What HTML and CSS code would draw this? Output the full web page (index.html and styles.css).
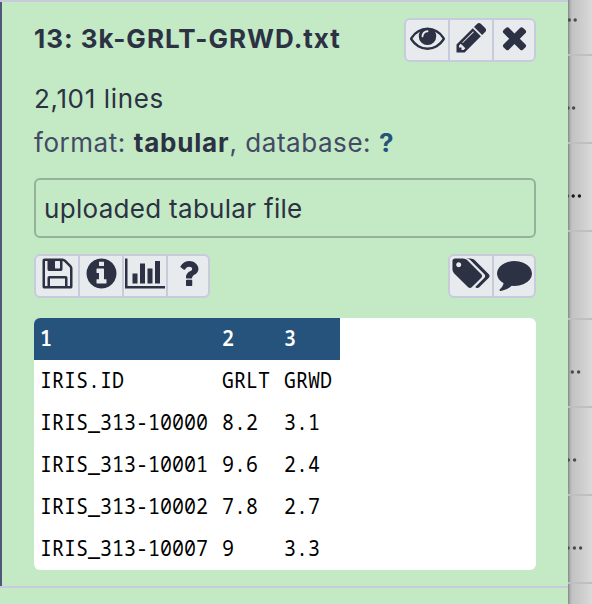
FILE: index.html
```html
<!DOCTYPE html>
<html lang="en">
<head>
<meta charset="utf-8">
<title>History item</title>
<link rel="stylesheet" href="styles.css">
</head>
<body>
<div class="app">
  <main class="history">
    <section class="dataset">
      <header class="title-row">
        <h1 class="title">13: 3k-GRLT-GRWD.txt</h1>
        <div class="group">
          <span class="btn"><svg class="icon" viewBox="0 0 1792 1792"><path d="M1664 960q-152-236-381-353 61 104 61 225 0 185-131.5 316.5t-316.5 131.5-316.5-131.5-131.5-316.5q0-121 61-225-229 117-381 353 133 205 333.5 326.5t434.5 121.5 434.5-121.5 333.5-326.5zm-720-384q0-20-14-34t-34-14q-125 0-214.5 89.5t-89.5 214.5q0 20 14 34t34 14 34-14 14-34q0-86 61-147t147-61q20 0 34-14t14-34zm848 384q0 34-20 69-140 230-376.5 368.5t-499.5 138.5-499.5-139-376.5-368q-20-35-20-69t20-69q140-229 376.5-368t499.5-139 499.5 139 376.5 368q20 35 20 69z"/></svg></span>
          <span class="btn"><svg class="icon" viewBox="0 0 1792 1792"><path d="M491 1536l91-91-235-235-91 91v107h128v128h107zm523-928q0-22-22-22-10 0-17 7l-542 542q-7 7-7 17 0 22 22 22 10 0 17-7l542-542q7-7 7-17zm-54-192l416 416-832 832h-416v-416zm683 96q0 53-37 90l-166 166-416-416 166-165q36-38 90-38 53 0 91 38l235 234q37 39 37 91z"/></svg></span>
          <span class="btn"><svg class="icon" viewBox="0 0 1792 1792"><path d="M1490 1322q0 40-28 68l-136 136q-28 28-68 28t-68-28l-294-294-294 294q-28 28-68 28t-68-28l-136-136q-28-28-28-68t28-68l294-294-294-294q-28-28-28-68t28-68l136-136q28-28 68-28t68 28l294 294 294-294q28-28 68-28t68 28l136 136q28 28 28 68t-28 68l-294 294 294 294q28 28 28 68z"/></svg></span>
        </div>
      </header>
      <p class="lines">2,101 lines</p>
      <p class="meta">format: <b>tabular</b>, database: <b class="link">?</b></p>
      <div class="info">uploaded tabular file</div>
      <div class="actions">
        <div class="group">
          <span class="btn"><svg class="icon" viewBox="0 0 1792 1792"><path d="M512 1536h768v-384h-768v384zm896 0h128v-896q0-14-10-38.5t-20-34.5l-281-281q-10-10-34-20t-39-10v416q0 40-28 68t-68 28h-576q-40 0-68-28t-28-68v-416h-128v1280h128v-416q0-40 28-68t68-28h832q40 0 68 28t28 68v416zm-384-928v-320q0-13-9.5-22.5t-22.5-9.5h-192q-13 0-22.5 9.5t-9.5 22.5v320q0 13 9.5 22.5t22.5 9.5h192q13 0 22.5-9.5t9.5-22.5zm640 32v928q0 40-28 68t-68 28h-1344q-40 0-68-28t-28-68v-1344q0-40 28-68t68-28h928q40 0 88 20t76 48l280 280q28 28 48 76t20 88z"/></svg></span>
          <span class="btn"><svg class="icon" viewBox="0 0 1792 1792"><path d="M1152 1376v-160q0-14-9-23t-23-9h-96v-512q0-14-9-23t-23-9h-320q-14 0-23 9t-9 23v160q0 14 9 23t23 9h96v320h-96q-14 0-23 9t-9 23v160q0 14 9 23t23 9h448q14 0 23-9t9-23zm-128-896v-160q0-14-9-23t-23-9h-192q-14 0-23 9t-9 23v160q0 14 9 23t23 9h192q14 0 23-9t9-23zm640 416q0 209-103 385.5t-279.5 279.5-385.5 103-385.5-103-279.5-279.5-103-385.5 103-385.5 279.5-279.5 385.5-103 385.5 103 279.5 279.5 103 385.5z"/></svg></span>
          <span class="btn"><svg class="icon wide" viewBox="0 0 2048 1792"><path d="M640 896v512h-256v-512h256zm384-512v1024h-256v-1024h256zm1024 1152v128h-2048v-1536h128v1408h1920zm-640-896v768h-256v-768h256zm384-384v1152h-256v-1152h256z"/></svg></span>
          <span class="btn"><svg class="icon" viewBox="0 0 1792 1792"><path d="M1088 1256v240q0 16-12 28t-28 12h-240q-16 0-28-12t-12-28v-240q0-16 12-28t28-12h240q16 0 28 12t12 28zm316-600q0 54-15.5 101t-35 76.5-55 59.5-57.5 43.5-61 35.5q-41 23-68.5 65t-27.5 67q0 17-12 32.5t-28 15.5h-240q-15 0-25.5-18.5t-10.5-37.5v-45q0-83 65-156.5t143-108.5q59-27 84-56t25-76q0-42-46.5-74t-107.5-32q-65 0-108 29-35 25-107 115-13 16-31 16-12 0-25-8l-164-125q-13-10-15.5-25t5.5-28q160-266 464-266 80 0 161 31t146 83 106 127.5 41 158.5z"/></svg></span>
        </div>
        <div class="group">
          <span class="btn"><svg class="icon wide" viewBox="-74 0 2048 1792"><path d="M448 448q0-53-37.5-90.5t-90.5-37.5-90.5 37.5-37.5 90.5 37.5 90.5 90.5 37.5 90.5-37.5 37.5-90.5zm1067 576q0 53-37 90l-491 492q-39 37-91 37-53 0-90-37l-715-716q-38-37-64.5-101t-26.5-117v-416q0-52 38-90t90-38h416q53 0 117 26.5t102 64.5l715 714q37 39 37 91zm384 0q0 53-37 90l-491 492q-39 37-91 37-36 0-59-14t-53-45l470-470q37-37 37-90 0-52-37-91l-715-714q-38-38-102-64.5t-117-26.5h224q53 0 117 26.5t102 64.5l715 714q37 39 37 91z"/></svg></span>
          <span class="btn"><svg class="icon" viewBox="0 0 1792 1792"><path d="M1792 896q0 174-120 321.5t-326 233-450 85.5q-70 0-145-8-198 175-460 242-49 14-114 22-17 2-30.5-9t-17.5-29v-1q-3-4-.5-12t2-10 4.5-9.5l6-9 7-8.5 8-9q7-8 31-34.5t34.5-38 31-39.5 32.5-51 27-59 26-76q-157-89-247.5-220t-90.5-281q0-130 71-248.5t191-204.5 286-136.5 348-50.5q244 0 450 85.5t326 233 120 321.5z"/></svg></span>
        </div>
      </div>
      <div class="preview">
        <table>
          <tr><th><span>1</span></th><th><span>2</span></th><th><span>3</span></th></tr>
          <tr><td><span>IRIS.ID</span></td><td><span>GRLT</span></td><td><span>GRWD</span></td></tr>
          <tr><td><span>IRIS_313-10000</span></td><td><span>8.2</span></td><td><span>3.1</span></td></tr>
          <tr><td><span>IRIS_313-10001</span></td><td><span>9.6</span></td><td><span>2.4</span></td></tr>
          <tr><td><span>IRIS_313-10002</span></td><td><span>7.8</span></td><td><span>2.7</span></td></tr>
          <tr><td><span>IRIS_313-10007</span></td><td><span>9</span></td><td><span>3.3</span></td></tr>
        </table>
      </div>
    </section>
  </main>
  <aside class="behind">
    <div class="row first"><svg class="dots" viewBox="0 0 24 4"><circle cx="1.3" cy="2" r="1.7"/><circle cx="7.2" cy="2" r="1.7"/></svg></div>
    <div class="row"><svg class="dots" viewBox="0 0 24 4"><circle cx="0" cy="2" r="1.7"/><circle cx="5.6" cy="2" r="1.7"/></svg></div>
    <div class="row"><svg class="dots dark" viewBox="0 0 24 4"><circle cx="-1" cy="2" r="1.7"/><circle cx="5.2" cy="2" r="1.7"/><circle cx="11.4" cy="2" r="1.7"/></svg></div>
    <div class="row"></div>
    <div class="row"><svg class="dots" viewBox="0 0 24 4"><circle cx="4.3" cy="2" r="1.7"/><circle cx="10.6" cy="2" r="1.7"/></svg></div>
    <div class="row"><svg class="dots" viewBox="0 0 24 4"><circle cx="0.3" cy="2" r="1.7"/><circle cx="6.6" cy="2" r="1.7"/></svg></div>
    <div class="row"><svg class="dots" viewBox="0 0 24 4"><circle cx="0" cy="2" r="1.7"/><circle cx="6.4" cy="2" r="1.7"/><circle cx="12.6" cy="2" r="1.7"/></svg></div>
    <div class="row"></div>
  </aside>
</div>
</body>
</html>
```
FILE: styles.css
```css
* { box-sizing: border-box; }
body { margin: 0; font-family: Inter, sans-serif; color: #2c3143; }
.app { display: flex; width: 592px; height: 604px; overflow: hidden; }
.history { width: 568px; flex: none; background: #c3e9c5; }
.dataset {
  height: 588px;
  border-top: 2px solid #c8cbdb;
  border-bottom: 2px solid #c8cbdb;
  padding: 16px 32px 0 34px;
  box-shadow: inset 2px 0 #4f5779;
}
.title-row { display: flex; justify-content: space-between; height: 44px; }
.title { margin: 0; font-size: 26px; line-height: 42px; font-weight: 650; letter-spacing: 1px; white-space: nowrap; }
.group { display: flex; border: 2px solid #c8cbdb; border-radius: 6px; background: #e8ebee; height: 44px; }
.btn { display: flex; justify-content: center; width: 42px; }
.btn + .btn { width: 44px; border-left: 2px solid #c8cbdb; }
.btn:last-child { width: 42px; }
.icon { width: 35px; height: 35px; flex: none; fill: #2c3143; overflow: visible; }
.icon.wide { width: 40px; }
p { margin: 0; font-size: 26px; line-height: 44px; white-space: nowrap; }
.lines { margin-top: 15px; letter-spacing: 0.65px; }
.meta { color: #434a65; letter-spacing: 0.55px; }
.meta b { color: #2c3143; letter-spacing: 0.8px; }
.meta .link { color: #25537b; }
.info { margin-top: 13px; height: 60px; border: 2px solid #94b298; border-radius: 6px; padding: 0 8px; font-size: 26px; line-height: 57px; letter-spacing: 0.3px; }
.actions { display: flex; justify-content: space-between; margin-top: 16px; }
.preview { margin-top: 20px; height: 252px; background: #fff; border-radius: 6px; overflow: hidden; }
table { border-collapse: collapse; font: 20px/42px "Noto Sans Mono", "DejaVu Sans Mono", monospace; color: #000; }
th, td { height: 42px; padding: 0 8px 0 6px; text-align: left; white-space: nowrap; }
th { background: #25537b; color: #fff; font-weight: 600; }
td span, th span { display: block; transform: translateY(-0.5px) scaleY(1.08); }
.behind { flex: 1; background: linear-gradient(90deg, #858585 0, #aeaeae 2px, #c3c3c3 4px, #cbcbcb 12px, #dadada 24px); }
.row { height: 88px; border-bottom: 2px solid #bdbfc0; display: flex; align-items: center; }
.row.first { height: 56px; align-items: flex-start; padding-top: 18px; }
.dots { width: 24px; height: 4px; fill: #494b50; margin-top: 18px; }
.first .dots { margin-top: 0; }
.dots.dark { fill: #17181c; }
```
